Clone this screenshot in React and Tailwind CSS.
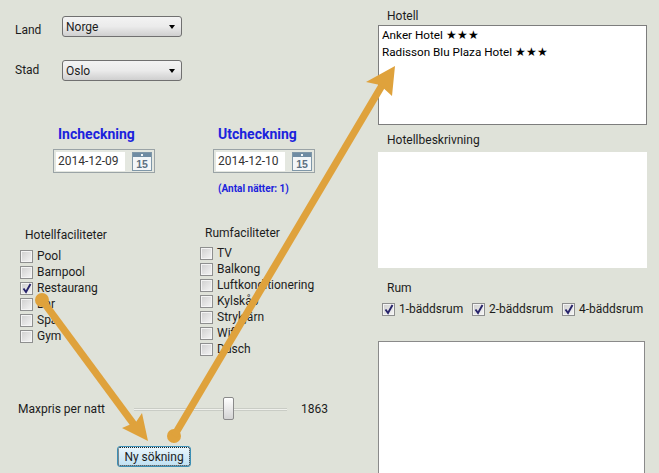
import React from 'react';

const Check = ({ checked }) => (
  <span className="relative flex h-[13px] w-[13px] shrink-0 items-center justify-center border border-[#8e8f8f] bg-[#f4f4f4]">
    <span className="h-[9px] w-[9px] bg-gradient-to-br from-[#d2d2d2] to-[#f2f2f2]" />
    {checked && (
      <svg className="absolute left-[1px] top-[0px]" width="10" height="11" viewBox="0 0 10 11">
        <path d="M1.5 5.5 L4 9 L8.5 1" fill="none" stroke="#27246b" strokeWidth="1.9" />
      </svg>
    )}
  </span>
);

const CheckRow = ({ label, checked }) => (
  <div className="flex h-4 items-center gap-[4px]">
    <Check checked={checked} />
    <span className="leading-4">{label}</span>
  </div>
);

const Select = ({ value }) => (
  <div className="flex h-[21px] w-[120px] items-center justify-between rounded-[3px] border border-[#707070] bg-gradient-to-b from-[#f3f3f3] via-[#ebebeb] to-[#cfcfcf] pl-[3px] pr-[6px]">
    <span className="pt-[1px]">{value}</span>
    <span className="h-0 w-0 border-x-[3.5px] border-t-[4px] border-x-transparent border-t-black" />
  </div>
);

const CalendarIcon = () => (
  <svg width="20" height="19" viewBox="0 0 20 19" className="shrink-0">
    <rect x="0.5" y="0.5" width="19" height="18" fill="#f3f6f8" stroke="#7f97a8" />
    <rect x="1" y="1" width="18" height="4" fill="#6f8ca3" />
    <rect x="9" y="2" width="2" height="2" fill="#f3f6f8" />
    <text x="10" y="15.5" textAnchor="middle" fontSize="10.5" fontFamily="Liberation Sans, sans-serif" fontWeight="700" fill="#5c7182">15</text>
  </svg>
);

const DateField = ({ title, value, children }) => (
  <div className="w-[102px]">
    <div className="h-[18px] whitespace-nowrap pl-[5px] text-[14px] font-bold leading-[18px] text-[#1b22dd]">{title}</div>
    <div className="mt-[6px] flex h-6 items-center gap-[7px] border border-[#9aa3a6] bg-[#e4e7e0] px-[2px]">
      <div className="flex h-[19px] w-[73px] items-center bg-white pl-[2px] text-[#333]">{value}</div>
      <CalendarIcon />
    </div>
    {children}
  </div>
);

const hotelFacilities = ['Pool', 'Barnpool', 'Restaurang', 'Bar', 'Spa', 'Gym'];
const roomFacilities = ['TV', 'Balkong', 'Luftkonditionering', 'Kylskåp', 'Strykjärn', 'Wifi', 'Dusch'];

export default function App() {
  return (
    <div className="relative flex h-[473px] w-[659px] overflow-hidden bg-[#dfe2d9] font-['Roboto',sans-serif] text-xs text-[#1c1c1c]">
      {/* Left column */}
      <div className="w-[378px] shrink-0">
        <div className="ml-[15px] mt-4 flex">
          <span className="mt-[5px] w-[47px] leading-[18px]">Land</span>
          <Select value="Norge" />
        </div>
        <div className="ml-[15px] mt-[21px] flex">
          <span className="mt-[1px] w-[47px] leading-[18px]">Stad</span>
          <Select value="Oslo" />
        </div>

        <div className="ml-[53px] mt-[44px] flex gap-[58px]">
          <DateField title="Incheckning" value="2014-12-09" />
          <DateField title="Utcheckning" value="2014-12-10">
            <div className="mt-[10px] whitespace-nowrap pl-[5px] text-[10px] font-bold leading-[12px] text-[#1b22dd]">(Antal nätter: 1)</div>
          </DateField>
        </div>

        <div className="mt-[3px] flex">
          <div className="ml-5 mt-[28px] w-[180px]">
            <div className="pl-[5px] leading-[18px]">Hotellfaciliteter</div>
            <div className="mt-[4px]">
              {hotelFacilities.map((f) => (
                <CheckRow key={f} label={f} checked={f === 'Restaurang'} />
              ))}
            </div>
          </div>
          <div className="mt-[26px]">
            <div className="pl-[5px] leading-[18px]">Rumfaciliteter</div>
            <div className="mt-[3px]">
              {roomFacilities.map((f) => (
                <CheckRow key={f} label={f} />
              ))}
            </div>
          </div>
        </div>

        <div className="ml-[18px] mt-[40px] flex h-[24px] items-center">
          <span className="w-[116px]">Maxpris per natt</span>
          <div className="relative flex h-full w-[153px] items-center">
            <div className="h-[3px] w-full border-y border-y-[#c9ccc5] bg-[#f0f1ed]" />
            <div className="absolute left-[89px] top-0 h-[23px] w-[11px] rounded-[2px] border border-[#8a8a8a] bg-gradient-to-b from-white to-[#d4d4d4]" />
          </div>
          <span className="ml-[14px]">1863</span>
        </div>

        <div className="ml-[117px] mt-[25px] flex h-[21px] w-[74px] items-center justify-center rounded-[3px] border border-[#3c8fb5] bg-gradient-to-b from-[#eaf6fd] to-[#bfe0f2] outline-1 -outline-offset-2 outline-dotted outline-[#222]">
          Ny sökning
        </div>
      </div>

      {/* Right column */}
      <div className="flex-1">
        <div className="ml-[9px] mt-[7px] leading-[18px]">Hotell</div>
        <div className="h-[100px] w-[269px] border border-[#7d7d7d] bg-white px-[3px] py-[1px] text-[11.7px]">
          <div className="leading-[16.5px] text-black">Anker Hotel ★★★</div>
          <div className="leading-[16.5px] text-black">Radisson Blu Plaza Hotel ★★★</div>
        </div>
        <div className="ml-[9px] mt-[6px] leading-[18px]">Hotellbeskrivning</div>
        <div className="mt-[3px] h-[116px] w-[269px] bg-white" />
        <div className="ml-[9px] mt-[11px] leading-[18px]">Rum</div>
        <div className="ml-1 mt-[4px] flex">
          <div className="w-[90px]"><CheckRow label="1-bäddsrum" checked /></div>
          <div className="w-[90px]"><CheckRow label="2-bäddsrum" checked /></div>
          <div><CheckRow label="4-bäddsrum" checked /></div>
        </div>
        <div className="mt-[24px] h-[140px] w-[267px] border border-[#8a8a8a] bg-white" />
      </div>

      {/* Annotation arrows */}
      <svg className="pointer-events-none absolute inset-0" width="659" height="473" viewBox="0 0 659 473">
        <g fill="#dfa23c">
          <circle cx="42" cy="300" r="7" />
          <path d="M39 302 L45 298 L141 428 L135 432 Z" />
          <path d="M148 441 L142 413 L136 422 L122 428 Z" />
          <circle cx="174" cy="436" r="7" />
          <path d="M171 434 L177 438 L390 79 L384 75 Z" />
          <path d="M395 66 L366 82 L380 85 L392 96 Z" />
        </g>
      </svg>
    </div>
  );
}
